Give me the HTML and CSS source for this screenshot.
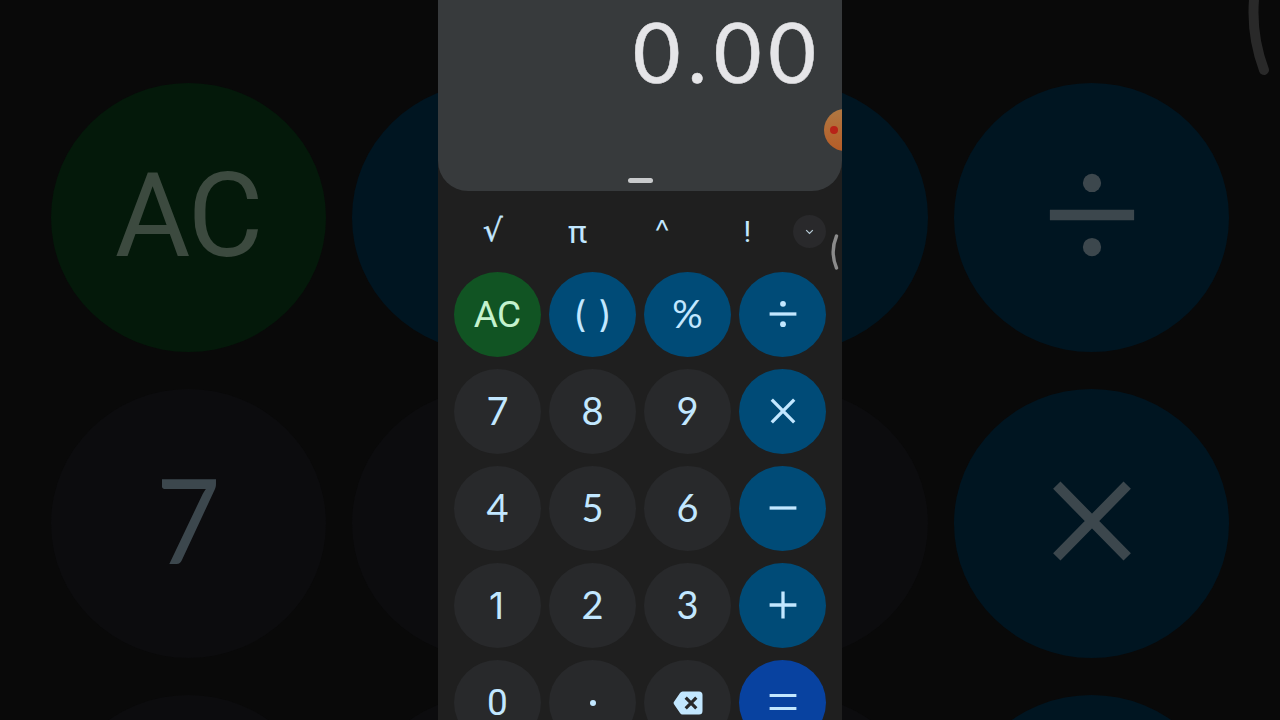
FILE: index.html
```html
<!DOCTYPE html>
<html lang="en">
<head>
<meta charset="utf-8">
<title>Calculator</title>
<link rel="stylesheet" href="styles.css">
</head>
<body>
<svg class="defs" aria-hidden="true">
  <symbol id="divide" viewBox="0 0 28 28"><path d="M.6 14H27.4" stroke="currentColor" stroke-width="3.3"/><circle cx="14" cy="3.8" r="2.9" fill="currentColor"/><circle cx="14" cy="24.2" r="2.9" fill="currentColor"/></symbol>
  <symbol id="times" viewBox="0 0 28 28"><path d="M2.8 2.6 25.2 25.4M25.2 2.6 2.8 25.4" stroke="currentColor" stroke-width="3.3"/></symbol>
  <symbol id="minus" viewBox="0 0 28 28"><path d="M.6 14H27.4" stroke="currentColor" stroke-width="3.3"/></symbol>
  <symbol id="plus" viewBox="0 0 28 28"><path d="M.6 14H27.4M14 .6V27.4" stroke="currentColor" stroke-width="3.3"/></symbol>
  <symbol id="equals" viewBox="0 0 28 28"><path d="M.6 7.5H27.4M.6 20.5H27.4" stroke="currentColor" stroke-width="3.2"/></symbol>
</svg>

<div class="backdrop" aria-hidden="true">
  <div class="backdrop-grid">
    <div class="shade green"><span class="shade-ac">AC</span></div>
    <div class="shade blue"></div>
    <div class="shade blue"></div>
    <div class="shade blue"><svg class="shade-icon"><use href="#divide"/></svg></div>
    <div class="shade"><span class="shade-digit">7</span></div>
    <div class="shade"></div>
    <div class="shade"></div>
    <div class="shade blue"><svg class="shade-icon"><use href="#times"/></svg></div>
    <div class="shade"></div>
    <div class="shade"></div>
    <div class="shade"></div>
    <div class="shade blue"></div>
  </div>
  <svg class="shade-handle" viewBox="0 0 30 80"><path d="M9 -10C5 20 9 46 18 70" fill="none" stroke="#292929" stroke-width="10" stroke-linecap="round"/></svg>
</div>

<main class="phone">
  <section class="display">
    <div class="value">0.00</div>
    <div class="grip"></div>
    <div class="recorder"><span class="recorder-dot"></span></div>
  </section>
  <div class="functions">
    <span class="fn root">√</span>
    <span class="fn pi">π</span>
    <span class="fn caret">^</span>
    <span class="fn bang">!</span>
    <button class="toggle"><svg width="9" height="6" viewBox="0 0 9 6"><path d="M1.2 1.2 4.5 4.5 7.8 1.2" fill="none" stroke="#b9cdd8" stroke-width="1.2"/></svg></button>
  </div>
  <div class="keys">
    <button class="key green ac">AC</button>
    <button class="key blue parens"><span>(</span><span>)</span></button>
    <button class="key blue percent">%</button>
    <button class="key blue"><svg class="op"><use href="#divide"/></svg></button>
    <button class="key">7</button>
    <button class="key">8</button>
    <button class="key">9</button>
    <button class="key blue"><svg class="op"><use href="#times"/></svg></button>
    <button class="key">4</button>
    <button class="key">5</button>
    <button class="key">6</button>
    <button class="key blue"><svg class="op"><use href="#minus"/></svg></button>
    <button class="key one">1</button>
    <button class="key">2</button>
    <button class="key">3</button>
    <button class="key blue"><svg class="op"><use href="#plus"/></svg></button>
    <button class="key zero">0</button>
    <button class="key"><span class="point"></span></button>
    <button class="key"><svg class="erase" viewBox="0 0 30 24"><path d="M9.5.5H26Q29.5.5 29.5 4V20Q29.5 23.5 26 23.5H9.5Q8 23.5 7 22L1 13.2Q.2 12 1 10.8L7 2Q8 .5 9.5.5Z" fill="#c2e7ff"/><path d="M12.7 6.7 23.3 17.3M23.3 6.7 12.7 17.3" stroke="#28292b" stroke-width="3.2"/></svg></button>
    <button class="key equals"><svg class="op"><use href="#equals"/></svg></button>
  </div>
  <svg class="handle" viewBox="0 0 12 38"><path d="M6.5 3C1.9 14 1.9 24 6.5 35" fill="none" stroke="#8b8b8b" stroke-width="3.4" stroke-linecap="round"/></svg>
</main>
</body>
</html>
```
FILE: styles.css
```css
* { box-sizing: border-box; }
body {
  margin: 0;
  width: 1280px;
  height: 720px;
  overflow: hidden;
  position: relative;
  background: #090909;
  font-family: Lato, sans-serif;
}
.defs { position: absolute; width: 0; height: 0; }

/* Dimmed, enlarged keypad behind the phone */
.backdrop { position: absolute; inset: 0; overflow: hidden; filter: blur(0.7px); }
.backdrop-grid {
  display: grid;
  grid-template-columns: repeat(4, 275px);
  grid-auto-rows: 269px;
  column-gap: 26px;
  row-gap: 37px;
  padding: 82.5px 0 0 51px;
}
.shade {
  display: flex;
  align-items: center;
  justify-content: center;
  border-radius: 50%;
  background: #0c0c0e;
  color: #3c474d;
}
.shade.green { background: #04190a; color: #3c4a3f; }
.shade.blue { background: #001521; }
.shade-ac { font: 116px/1 Roboto, sans-serif; letter-spacing: -2px; padding: 0 1px 3px 0; }
.shade-digit { font-size: 118px; line-height: 1; padding: 0 1px 8px 0; transform: scaleX(0.94); }
.shade-icon { width: 88px; height: 88px; margin-top: -5px; }
.shade-handle { position: absolute; left: 1246px; top: 0; width: 30px; height: 80px; }

.phone {
  position: relative;
  width: 404px;
  height: 720px;
  margin: 0 auto;
  overflow: hidden;
  background: #1f1f1f;
}
.display {
  position: relative;
  display: flex;
  flex-direction: column;
  align-items: center;
  justify-content: space-between;
  height: 191px;
  padding: 2px 20px 8px;
  overflow: hidden;
  border-radius: 0 0 30px 30px;
  background: #373a3c;
}
.value {
  align-self: flex-end;
  color: #e5e5e8;
  font-size: 82.5px;
  line-height: 100px;
  letter-spacing: 6.8px;
  margin-right: -1px;
  -webkit-text-stroke: 0.5px currentColor;
}
.grip { width: 25px; height: 5px; border-radius: 3px; background: #c8cacc; }
.recorder {
  position: absolute;
  left: 386px;
  top: 109px;
  width: 42px;
  height: 42px;
  padding: 17px 6px;
  border-radius: 50%;
  background: linear-gradient(#b07842, #b65c27);
}
.recorder-dot { display: block; width: 8px; height: 8px; border-radius: 50%; background: #b82318; }

.functions {
  display: flex;
  align-items: center;
  height: 81px;
  padding: 0 16px 0 12.5px;
  color: #c2e7ff;
  font: 28px/40px Roboto, sans-serif;
}
.fn { flex: 0 0 84.7px; text-align: center; }
.root { font: 31px/40px "DejaVu Sans", sans-serif; -webkit-text-stroke: 0.4px currentColor; padding-bottom: 3px; }
.pi { font-size: 32px; }
.caret { font: 300 34px/40px Inter, sans-serif; padding-top: 1px; }
.bang { font-size: 30px; padding-left: 1px; }
.toggle {
  display: flex;
  align-items: center;
  justify-content: center;
  width: 33px;
  height: 33px;
  flex: none;
  margin-left: auto;
  padding: 0;
  border: 0;
  border-radius: 50%;
  background: #29292b;
}

.keys {
  display: grid;
  grid-template-columns: repeat(4, 87px);
  grid-auto-rows: 85px;
  gap: 12px 8px;
  padding: 0 16px;
}
.key {
  display: flex;
  align-items: center;
  justify-content: center;
  padding: 0 0 3px;
  border: 0;
  border-radius: 50%;
  background: #28292b;
  color: #c2e7ff;
  font: 38px/1 Lato, sans-serif;
}
.key.green { background: #115423; color: #c4f2ce; }
.key.blue { background: #004b77; padding: 0 0 1px; }
.key.equals { background: #0842a0; padding: 0 0 1px; }
.key.ac { font: 37px/1 Roboto, sans-serif; letter-spacing: -0.7px; padding: 0 1px 0 0; }
.key.parens { gap: 12px; font: 36px/1 Inter, sans-serif; padding-bottom: 1px; }
.key.percent { font-size: 38px; padding-bottom: 3px; }
.key.one { font: 37px/1 Inter, sans-serif; padding: 0 2px 0 0; }
.key.zero { font: 37px/32px Roboto, sans-serif; padding: 0; }
.op { width: 28px; height: 28px; }
.point { width: 6px; height: 6px; border-radius: 50%; background: #c2e7ff; margin-top: 3px; }
.erase { width: 30px; height: 24px; margin-top: 3px; }
.handle { position: absolute; left: 392px; top: 233px; width: 12px; height: 38px; }
```
